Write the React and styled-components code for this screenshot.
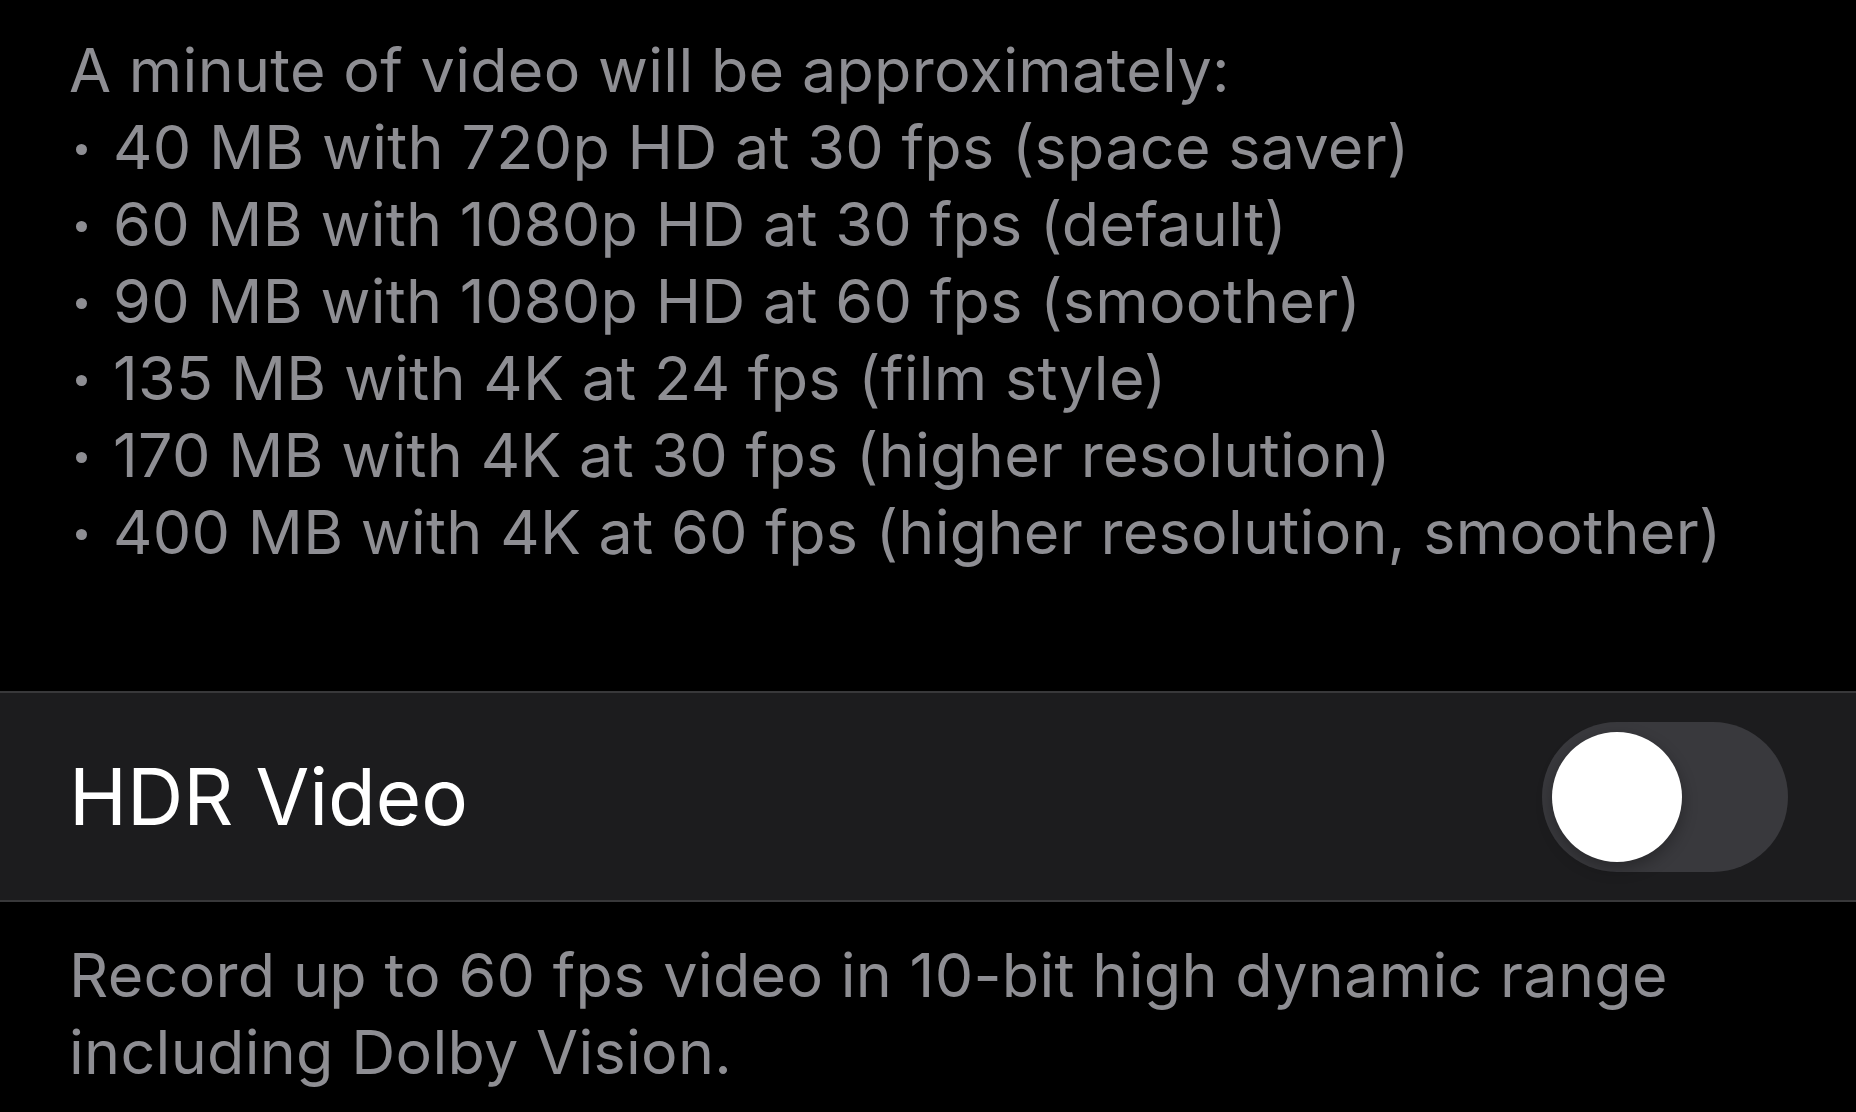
import styled, { createGlobalStyle } from "styled-components";
import { useState } from "react";

const sizes = [
  "40 MB with 720p HD at 30 fps (space saver)",
  "60 MB with 1080p HD at 30 fps (default)",
  "90 MB with 1080p HD at 60 fps (smoother)",
  "135 MB with 4K at 24 fps (film style)",
  "170 MB with 4K at 30 fps (higher resolution)",
  "400 MB with 4K at 60 fps (higher resolution, smoother)",
];

export default function App() {
  const [hdr, setHdr] = useState(false);

  return (
    <>
      <GlobalStyle />
      <Screen>
        <Footnote $top={32} $bottom={120}>
          <div>A minute of video will be approximately:</div>
          {sizes.map((s) => (
            <div key={s}>
              <Dot />
              {s}
            </div>
          ))}
        </Footnote>

        <Row>
          <RowLabel>HDR Video</RowLabel>
          <Toggle $on={hdr} onClick={() => setHdr(!hdr)}>
            <Knob $on={hdr} />
          </Toggle>
        </Row>

        <Footnote $top={35} $bottom={20}>
          Record up to 60 fps video in 10-bit high dynamic range
          <br />
          including Dolby Vision.
        </Footnote>
      </Screen>
    </>
  );
}

const GlobalStyle = createGlobalStyle`
  html, body {
    margin: 0;
    background: #000;
  }
`;

const Screen = styled.div`
  min-height: 1112px;
  background: #000;
  font-family: Inter, "Liberation Sans", sans-serif;
  overflow: hidden;
`;

const Footnote = styled.div`
  padding: ${({ $top }) => $top}px 68px ${({ $bottom }) => $bottom}px 69px;
  color: #8e8e93;
  font-size: 61px;
  line-height: 77px;
  letter-spacing: 0.3px;
  white-space: nowrap;
`;

const Dot = styled.span`
  display: inline-block;
  width: 11px;
  height: 11px;
  margin: 0 26px 0 7px;
  border-radius: 50%;
  background: #8e8e93;
  vertical-align: 14px;
`;

const Row = styled.div`
  display: flex;
  align-items: center;
  justify-content: space-between;
  height: 207px;
  padding: 0 68px 0 69px;
  background: #1c1c1e;
  border-top: 2px solid #38383a;
  border-bottom: 2px solid #38383a;
`;

const RowLabel = styled.span`
  color: #fff;
  font-size: 78px;
`;

const Toggle = styled.div`
  position: relative;
  width: 246px;
  height: 150px;
  border-radius: 75px;
  background: ${({ $on }) => ($on ? "#34c759" : "#39393d")};
  cursor: pointer;
`;

const Knob = styled.div`
  position: absolute;
  top: 10px;
  left: ${({ $on }) => ($on ? "106px" : "10px")};
  width: 130px;
  height: 130px;
  border-radius: 50%;
  background: #fff;
  box-shadow: 0 6px 16px rgba(0, 0, 0, 0.3);
`;
